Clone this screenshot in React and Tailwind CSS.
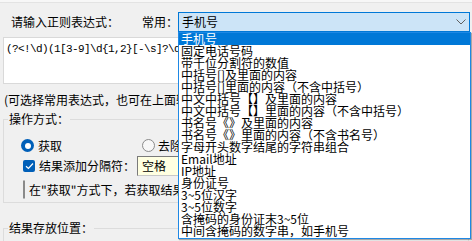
import React from "react";

const items = [
  "手机号",
  "固定电话号码",
  "带千位分割符的数值",
  "中括号[]及里面的内容",
  "中括号[]里面的内容（不含中括号）",
  "中文中括号【】及里面的内容",
  "中文中括号【】里面的内容（不含中括号）",
  "书名号《》及里面的内容",
  "书名号《》里面的内容（不含书名号）",
  "字母开头数字结尾的字符串组合",
  "Email地址",
  "IP地址",
  "身份证号",
  "3~5位汉字",
  "3~5位数字",
  "含掩码的身份证末3~5位",
  "中间含掩码的数字串，如手机号",
];

function Radio({ checked }) {
  return checked ? (
    <span className="w-[13px] h-[13px] rounded-full bg-[#005fb8] flex items-center justify-center shrink-0">
      <span className="w-[6px] h-[6px] rounded-full bg-white" />
    </span>
  ) : (
    <span className="w-[13px] h-[13px] rounded-full border border-[#8a8a8a] bg-[#f7f7f7] shrink-0" />
  );
}

function Check({ checked }) {
  return checked ? (
    <span className="w-[12px] h-[12px] rounded-[2px] bg-[#005fb8] flex items-center justify-center shrink-0">
      <svg width="9" height="8" viewBox="0 0 9 8" fill="none">
        <path d="M1 4.2 L3.4 6.5 L8 1.5" stroke="white" strokeWidth="1.2" />
      </svg>
    </span>
  ) : (
    <span className="w-[12px] h-[12px] rounded-[2px] border border-[#8a8a8a] bg-white shrink-0" />
  );
}

export default function App() {
  return (
    <div className="relative w-[472px] h-[241px] overflow-hidden bg-[#f0f0f0] text-black text-[12px] leading-[12px] font-['Noto_Sans_CJK_SC',sans-serif]">
      <div className="h-[3px] bg-[#f7f7f7] border-b border-[#e3e3e3]" />
      {/* row 1 */}
      <div className="mt-[9px] flex items-center h-[20px]">
        <span className="ml-[11px] w-[131px]">请输入正则表达式：</span>
        <span className="w-[36px]">常用：</span>
        <div className="w-[292px] h-[20px] border border-[#0078d7] bg-[#cce4f7] flex items-center justify-between pl-[3px] pr-[3px]">
          <span>手机号</span>
          <svg width="10" height="6" viewBox="0 0 10 6" fill="none">
            <path d="M0.5 0.5 L5 5 L9.5 0.5" stroke="#606060" strokeWidth="1" />
          </svg>
        </div>
      </div>
      {/* textarea */}
      <div className="mt-[5px] ml-[3px] w-[466px] h-[47px] bg-white border border-[#d9d9d9] pl-[2px] pt-[3px]">
        <span className="font-['Liberation_Mono',monospace] text-[11px] tracking-[-0.6px] leading-[12px] whitespace-nowrap">
          {"(?<!\\d)(1[3-9]\\d{1,2}[-\\s]?\\d{4}[-\\s]?\\d{4})(?!\\d)"}
        </span>
      </div>
      {/* hint */}
      <div className="mt-[9px] ml-[4px] h-[14px] leading-[14px] whitespace-nowrap">
        (可选择常用表达式，也可在上面输入自定义正则表达式)
      </div>
      {/* group box 1 */}
      <div className="mt-[6px] relative ml-[3px] w-[466px] h-[84px] border border-[#dcdcdc] mt-[12px]">
        <span className="absolute -top-[7px] left-[4px] bg-[#f0f0f0] px-[1px] leading-[12px]">操作方式：</span>
        <div className="flex flex-col pl-[17px] pt-[19px]">
          <div className="flex items-center h-[13px]">
            <Radio checked />
            <span className="ml-[4px] w-[104px]">获取</span>
            <Radio />
            <span className="ml-[3px]">去除</span>
          </div>
          <div className="flex items-center mt-[4px] h-[20px]">
            <span className="ml-[2px]"><Check checked /></span>
            <span className="ml-[4px] w-[98px]">结果添加分隔符：</span>
            <div className="w-[96px] h-[20px] bg-[#ffffe1] border border-[#7a7a7a] border-b-[#c8c8c8] border-r-[#c8c8c8] flex items-center pl-[4px]">
              空格
            </div>
          </div>
          <div className="flex items-center mt-[8px] h-[12px]">
            <span className="ml-[2px]"><Check /></span>
            <span className="ml-[4px] whitespace-nowrap">在"获取"方式下，若获取结果为空则保留原内容</span>
          </div>
        </div>
      </div>
      {/* group box 2 */}
      <div className="relative ml-[3px] mt-[25px] w-[466px] h-[40px] border border-[#dcdcdc]">
        <span className="absolute -top-[7px] left-[4px] bg-[#f0f0f0] px-[1px] leading-[12px]">结果存放位置：</span>
      </div>

      {/* dropdown list */}
      <div className="absolute left-[178px] top-[32px] w-[293px] h-[207px] bg-white border border-[#1e88e5] shadow-[1px_1px_1px_rgba(0,0,0,0.3)] font-['Noto_Sans_CJK_SC',sans-serif]">
        {items.map((t, i) => (
          <div
            key={i}
            className={
              "h-[12px] leading-[12px] pl-[2px] whitespace-nowrap " +
              (i === 0 ? "bg-[#0078d7] text-white" : "text-black")
            }
          >
            {t}
          </div>
        ))}
      </div>
    </div>
  );
}
